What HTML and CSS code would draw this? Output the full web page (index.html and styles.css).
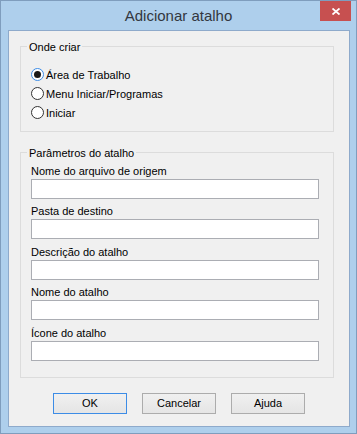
FILE: index.html
```html
<!DOCTYPE html>
<html lang="pt">
<head>
    <meta charset="UTF-8">
    <title>Adicionar atalho</title>
    <link rel="stylesheet" href="styles.css">
</head>
<body>
    <div class="window">
        <div class="titlebar">
            <span></span>
            <div class="title">Adicionar atalho</div>
            <div class="close-btn">
                <svg width="8" height="7" viewBox="0 0 8 7">
                    <path d="M0.5 0.5 L7.5 6.5 M7.5 0.5 L0.5 6.5" stroke="#fff" stroke-width="1.8" fill="none"/>
                </svg>
            </div>
        </div>

        <div class="client">
            <div class="group group-where">
                <div class="group-title">Onde criar</div>
                <label class="radio"><span class="radio-mark checked"></span>Área de Trabalho</label>
                <label class="radio"><span class="radio-mark"></span>Menu Iniciar/Programas</label>
                <label class="radio"><span class="radio-mark"></span>Iniciar</label>
            </div>

            <div class="group group-params">
                <div class="group-title">Parâmetros do atalho</div>
                <div class="field">
                    <div class="field-label">Nome do arquivo de origem</div>
                    <div class="input"></div>
                </div>
                <div class="field">
                    <div class="field-label">Pasta de destino</div>
                    <div class="input"></div>
                </div>
                <div class="field">
                    <div class="field-label">Descrição do atalho</div>
                    <div class="input"></div>
                </div>
                <div class="field">
                    <div class="field-label">Nome do atalho</div>
                    <div class="input"></div>
                </div>
                <div class="field">
                    <div class="field-label">Ícone do atalho</div>
                    <div class="input"></div>
                </div>
            </div>

            <div class="buttons">
                <div class="btn btn-default">OK</div>
                <div class="btn">Cancelar</div>
                <div class="btn">Ajuda</div>
            </div>
        </div>
    </div>
</body>
</html>
```

FILE: styles.css
```css
body {
    margin: 0;
    font-family: "Liberation Sans", Arial, sans-serif;
    font-size: 11px;
    color: #000;
}

.window {
    width: 357px;
    height: 434px;
    box-sizing: border-box;
    border: 1px solid #7f9dbd;
    background: #aecfec;
    display: flex;
    flex-direction: column;
}

.titlebar {
    height: 29px;
    display: grid;
    grid-template-columns: 1fr auto 1fr;
    align-items: start;
}

.title {
    font-size: 15px;
    line-height: 29px;
    color: #333740;
}

.close-btn {
    justify-self: end;
    width: 31px;
    height: 20px;
    margin-right: 5px;
    background: #c75050;
    display: flex;
    align-items: center;
    justify-content: center;
}

.close-btn svg {
    display: block;
    margin-top: 1px;
}

.client {
    flex: 1;
    margin: 0 6px 6px 7px;
    border: 1px solid #8eaacb;
    background: #f0f0f0;
}

.group {
    width: 314px;
    box-sizing: border-box;
    margin-left: 11px;
    border: 1px solid #dcdcdc;
    padding-left: 10px;
}

.group-title {
    width: fit-content;
    margin: -7px 0 0 -4px;
    padding: 0 2px;
    background: #f0f0f0;
    line-height: 15px;
}

.group-where {
    margin-top: 15px;
    height: 86px;
}

.radio {
    display: flex;
    align-items: center;
    height: 19px;
}

.group-title + .radio {
    margin-top: 10px;
}

.radio-mark {
    width: 13px;
    height: 13px;
    box-sizing: border-box;
    border: 1px solid #333;
    border-radius: 50%;
    background: #fff;
    margin-right: 2px;
    display: flex;
    align-items: center;
    justify-content: center;
}

.radio-mark.checked {
    border-color: #3c8ce6;
}

.radio-mark.checked::after {
    content: "";
    width: 7px;
    height: 7px;
    border-radius: 50%;
    background: #1a1a1a;
}

.group-params {
    margin-top: 20px;
    height: 226px;
}

.field {
    margin-top: 5.5px;
}

.group-title + .field {
    margin-top: 2.5px;
}

.field-label {
    line-height: 15px;
}

.input {
    width: 288px;
    height: 20px;
    box-sizing: border-box;
    border: 1px solid #abadb3;
    background: #fff;
}

.buttons {
    display: flex;
    gap: 15px;
    margin-top: 15px;
    padding-left: 44px;
}

.btn {
    width: 74px;
    height: 21px;
    box-sizing: border-box;
    border: 1px solid #acacac;
    background: linear-gradient(#f0f0f0, #e5e5e5);
    text-align: center;
    line-height: 19px;
}

.btn-default {
    border-color: #3c8ce6;
}
```
